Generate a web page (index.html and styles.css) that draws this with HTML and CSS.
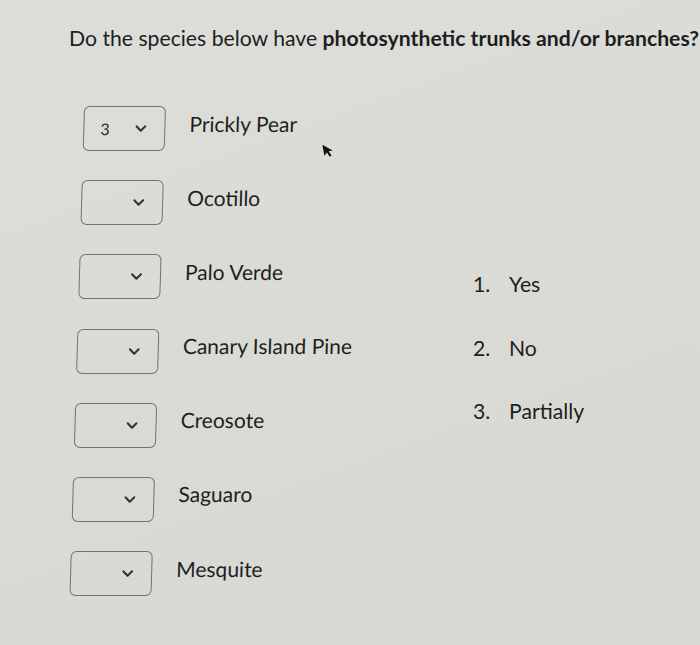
FILE: index.html
```html
<!DOCTYPE html>
<html>
<head>
<meta charset="utf-8">
<link rel="stylesheet" href="styles.css">
</head>
<body>
<div class="page">
  <h1 class="question">Do the species below have <b>photosynthetic trunks and/or branches?</b></h1>
  <div class="quiz">
    <div class="rows">
      <div class="row"><div class="select"><span class="val">3</span><svg class="chev" viewBox="0 0 10 6"><path d="M1 1 L5 5 L9 1"/></svg></div><span class="label">Prickly Pear</span></div>
      <div class="row"><div class="select"><span class="val"></span><svg class="chev" viewBox="0 0 10 6"><path d="M1 1 L5 5 L9 1"/></svg></div><span class="label">Ocotillo</span></div>
      <div class="row"><div class="select"><span class="val"></span><svg class="chev" viewBox="0 0 10 6"><path d="M1 1 L5 5 L9 1"/></svg></div><span class="label">Palo Verde</span></div>
      <div class="row"><div class="select"><span class="val"></span><svg class="chev" viewBox="0 0 10 6"><path d="M1 1 L5 5 L9 1"/></svg></div><span class="label">Canary Island Pine</span></div>
      <div class="row"><div class="select"><span class="val"></span><svg class="chev" viewBox="0 0 10 6"><path d="M1 1 L5 5 L9 1"/></svg></div><span class="label">Creosote</span></div>
      <div class="row"><div class="select"><span class="val"></span><svg class="chev" viewBox="0 0 10 6"><path d="M1 1 L5 5 L9 1"/></svg></div><span class="label">Saguaro</span></div>
      <div class="row"><div class="select"><span class="val"></span><svg class="chev" viewBox="0 0 10 6"><path d="M1 1 L5 5 L9 1"/></svg></div><span class="label">Mesquite</span></div>
      <svg class="cursor" viewBox="0 0 14 18"><path d="M1 1 L1 14 L4.5 10.8 L7 16.5 L9.2 15.5 L6.8 10 L11.5 10 Z"/></svg>
    </div>
    <ol class="options">
      <li><span class="num">1.</span><span>Yes</span></li>
      <li><span class="num">2.</span><span>No</span></li>
      <li><span class="num">3.</span><span>Partially</span></li>
    </ol>
  </div>
</div>
</body>
</html>
```
FILE: styles.css
```css
html, body {
  margin: 0;
  padding: 0;
}
body {
  width: 700px;
  height: 645px;
  overflow: hidden;
  background: linear-gradient(160deg, #dddeda 0%, #dadbd5 45%, #d7d8d2 100%);
  font-family: Lato, "Open Sans", sans-serif;
  color: #1e1e1e;
}
.page {
  padding: 26px 0 0 69px;
}
.question {
  margin: 0;
  font-size: 21.2px;
  font-weight: 400;
  line-height: 24px;
  white-space: nowrap;
}
.question b {
  font-weight: 700;
}
.quiz {
  margin-top: 56px;
  margin-left: 15px;
  display: flex;
}
.rows {
  position: relative;
  width: 389px;
  display: flex;
  flex-direction: column;
  gap: 29.2px;
  transform: skewX(-1.7deg);
  transform-origin: 0 0;
}
.row {
  display: flex;
  align-items: center;
  height: 45px;
}
.select {
  box-sizing: border-box;
  width: 82px;
  height: 45px;
  border: 1.5px solid #727270;
  border-radius: 6px;
  display: flex;
  align-items: center;
  padding-left: 16px;
}
.val {
  width: 35px;
  font-size: 16px;
  color: #2a2a2a;
}
.chev {
  width: 11px;
  height: 7px;
  fill: none;
  stroke: #333;
  stroke-width: 1.9;
  stroke-linecap: round;
  stroke-linejoin: round;
}
.label {
  margin-left: 24px;
  font-size: 21px;
  margin-top: -11px;
}
.options {
  list-style: none;
  margin: 0;
  padding: 166px 0 0 0;
  display: flex;
  flex-direction: column;
  gap: 39.5px;
  font-size: 21.2px;
}
.options li {
  display: flex;
  height: 24px;
  line-height: 24px;
}
.num {
  width: 36px;
}
.cursor {
  position: absolute;
  left: 240px;
  top: 36px;
  width: 12px;
  height: 17px;
  fill: #111;
  transform: rotate(-12deg);
}
```
